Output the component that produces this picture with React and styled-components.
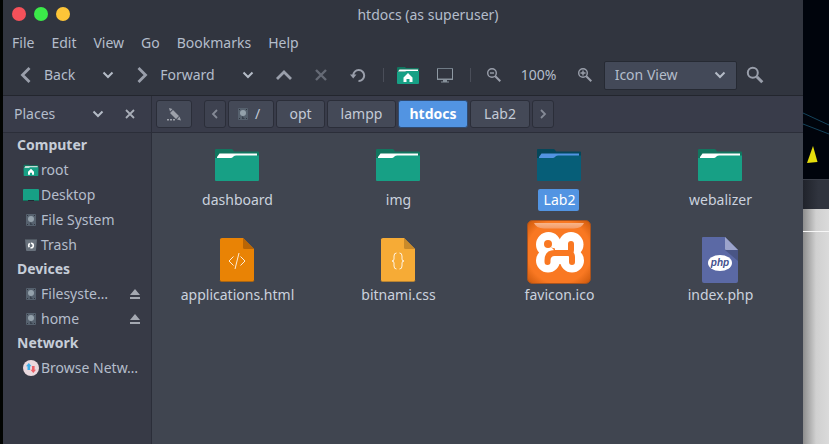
import React from 'react';
import styled, { createGlobalStyle } from 'styled-components';

const Global = createGlobalStyle`
  *, *::before, *::after { box-sizing: border-box; }
  body { margin: 0; background: #000; }
  button, select { font: inherit; color: inherit; margin: 0; }
  svg { display: block; flex: none; }
`;

const Desktop = styled.div`
  display: grid;
  grid-template-columns: 3px minmax(0, 1fr) 26px;
  min-height: 100vh;
  background: #000205;
  font: 14px/20px "Noto Sans", sans-serif;
  color: #b4bdcb;
`;

const EdgeLeft = styled.div`
  background: #010301;
`;

const EdgeRight = styled.div`
  display: flex;
  flex-direction: column;
  background: linear-gradient(90deg, #8d8d8d, #d0d0d0 50%, #dadada);
`;

const Wallpaper = styled.div`
  height: 179px;
  background: #00040c;
`;

const BackWindowBar = styled.div`
  height: 30px;
  border-top: 1px solid #3c404a;
  background: linear-gradient(90deg, #20232b, #30343e 60%);
`;

const BackWindowLine = styled.div`
  height: 23px;
  border-bottom: 1px solid #f6f6f6;
`;

const Window = styled.main`
  display: flex;
  flex-direction: column;
  background: #31353f;
`;

const TitleBar = styled.header`
  display: grid;
  grid-template-columns: 1fr auto 1fr;
  align-items: center;
  height: 28px;
  padding: 0 9px;
`;

const Lights = styled.div`
  display: flex;
  gap: 8px;
`;

const Light = styled.button`
  width: 14px;
  height: 14px;
  padding: 0;
  border: 0;
  border-radius: 50%;
  background: ${(p) => p.$color};
`;

const Title = styled.h1`
  margin: 0;
  padding-top: 2px;
  padding-left: 50px;
  font-size: 14px;
  font-weight: 400;
`;

const MenuBar = styled.nav`
  display: flex;
  gap: 17px;
  align-items: center;
  height: 29px;
  padding: 0 9px;
`;

const PlainButton = styled.button`
  display: flex;
  align-items: center;
  justify-content: center;
  padding: 0;
  border: 0;
  background: none;
  opacity: ${(p) => (p.$dim ? 0.5 : 1)};
`;

const ToolBar = styled.div`
  display: flex;
  align-items: center;
  height: 39px;
  padding: 0 15px 2px;
  border-bottom: 1px solid #23262e;
`;

const NavButton = styled(PlainButton)`
  gap: 10px;
  margin-right: 25px;
`;

const HistoryButton = styled(PlainButton)`
  margin-right: ${(p) => p.$after}px;
`;

const ToolButton = styled(PlainButton)`
  width: ${(p) => p.$width || 37}px;
  height: 28px;
`;

const Divider = styled.span`
  width: 1px;
  height: 14px;
  margin: 0 6px;
  background: #4a4e59;
`;

const ZoomLevel = styled.output`
  width: 56px;
  text-align: center;
`;

const ViewBox = styled.label`
  display: grid;
  width: 133px;
  height: 29px;
  align-items: center;
  > * { grid-area: 1 / 1; }
  > svg { justify-self: end; margin-right: 9px; pointer-events: none; }
`;

const ViewSelect = styled.select`
  appearance: none;
  width: 100%;
  height: 100%;
  padding: 0 10px;
  border: 1px solid #262a33;
  border-radius: 2px;
  background: #434958;
`;

const Body = styled.div`
  display: grid;
  grid-template-columns: 149px minmax(0, 1fr);
  grid-template-rows: 37px 1fr;
  flex: 1;
`;

const PaneHeader = styled.div`
  display: flex;
  align-items: center;
  justify-content: space-between;
  padding: 0 13px 1px 11px;
  border-right: 1px solid #2b2e39;
  border-bottom: 1px solid #2b2e39;
  background: #393c4a;
`;

const PaneTools = styled.div`
  display: flex;
  gap: 16px;
`;

const PathBar = styled.nav`
  display: flex;
  align-items: center;
  gap: 2px;
  padding: 0 4px 1px;
  border-bottom: 1px solid #2b2e39;
  background: #393c4a;
`;

const PathButton = styled.button`
  display: flex;
  align-items: center;
  justify-content: center;
  gap: 4px;
  width: ${(p) => p.$width}px;
  height: 28px;
  margin-right: ${(p) => p.$after || 0}px;
  padding: 0;
  border: 1px solid ${(p) => (p.$active ? '#2f4a70' : '#2b2e39')};
  border-radius: 3px;
  background: ${(p) => (p.$active ? '#5294e2' : p.$flat ? '#3e4250' : '#444957')};
  color: ${(p) => (p.$active ? '#fff' : p.$flat ? '#7c818d' : '#c3cad6')};
  font-weight: ${(p) => (p.$active ? 700 : 400)};
`;

const RootButton = styled(PathButton)`
  padding-right: 7px;
`;

const Sidebar = styled.aside`
  border-right: 1px solid #2b2e39;
  background: #373a46;
`;

const GroupTitle = styled.h2`
  margin: 0;
  padding-left: 14px;
  font-size: 14px;
  font-weight: 700;
  line-height: 24px;
  color: #c6cdd8;
`;

const PlaceList = styled.ul`
  margin: 0;
  padding: 0;
  list-style: none;
`;

const Place = styled.li`
  display: flex;
  align-items: center;
  gap: 2px;
  height: 25px;
  padding: 0 11px 0 20px;
`;

const PlaceName = styled.a`
  flex: 1;
  white-space: nowrap;
  color: inherit;
  text-decoration: none;
`;

const Files = styled.section`
  display: grid;
  grid-template-columns: repeat(4, minmax(0, 1fr));
  align-content: start;
  row-gap: 9px;
  padding: 8px 3px 0 4px;
  background: #404550;
`;

const FileItem = styled.button`
  display: flex;
  flex-direction: column;
  align-items: center;
  justify-content: flex-end;
  padding: 0;
  border: 0;
  background: none;
`;

const FileName = styled.span`
  padding: 0 4px 0 6px;
  line-height: 22px;
  border-radius: 2px;
  color: ${(p) => (p.$selected ? '#fff' : '#cbd2de')};
  background: ${(p) => (p.$selected ? '#5294e2' : 'transparent')};
`;

const Stroke = ({ d, size = 16, width = 2, color = '#9a9fab' }) => (
  <svg width={size} height={size} viewBox="0 0 16 16" fill="none" stroke={color} strokeWidth={width}>
    <path d={d} />
  </svg>
);

const Down = () => <Stroke d="M3.500 5.500 8 10l4.500-4.500" color="#b4bbc6" />;

const FolderIcon = ({ selected }) => {
  const [back, paper, front] = selected ? ['#05475a', '#5294e2', '#065e78'] : ['#12755f', '#fff', '#17a085'];
  return (
    <svg width="48" height="48" viewBox="0 0 48 48">
      <path d="M3 8h15.500q1 0 1.500 1l1 1.500H45q1 0 1 1V24H2V9q0-1 1-1z" fill={back} />
      <path d="M4 18v-2l2.500-3.500H44V18z" fill={paper} />
      <path d="M2 39V17h16q1 0 2-1l1-1q1-.5 2-.5h23V39q0 1-1 1H3q-1 0-1-1z" fill={front} />
    </svg>
  );
};

const HomeIcon = ({ width = 24, height = 18 }) => (
  <svg width={width} height={height} viewBox="0 0 24 18">
    <path d="M1 2q0-1 1-1h7l1 1h12q1 0 1 1v7H1z" fill="#12755f" />
    <path d="M2 5.500 3.500 3.500H22v2z" fill="#fff" />
    <path d="M1 6h8l1.500-1H23v12q0 1-1 1H2q-1 0-1-1z" fill="#17a085" />
    <path d="m12 7 4.500 4.500V16h-3v-3h-3v3h-3v-4.500z" fill="#fff" />
  </svg>
);

const SmallHomeIcon = () => <HomeIcon width={16} height={12} />;

const DesktopIcon = () => (
  <svg width="16" height="16" viewBox="0 0 16 16">
    <rect y="2" width="16" height="12" rx="1" fill="#17a085" />
    <path d="M0 13h16v1H0z" fill="#12755f" />
    <path d="M5 13h6v1H5z" fill="#1f2a33" />
  </svg>
);

const DriveIcon = () => (
  <svg width="16" height="16" viewBox="0 0 16 16">
    <rect x="3" y="2" width="10" height="12" rx="1" fill="#56616e" />
    <path d="M4 3h1v1H4zm7 0h1v1h-1zM4 12h1v1H4zm7 0h1v1h-1z" fill="#303640" />
    <circle cx="8" cy="7" r="3" fill="#94a1ab" />
    <path d="m7 10 3 3H7z" fill="#39424e" />
  </svg>
);

const TrashIcon = () => (
  <svg width="16" height="16" viewBox="0 0 16 16">
    <path d="M2 2h12l-1 11q0 1-1 1H4q-1 0-1-1z" fill="#68717c" />
    <path d="M2 2h12v1H2z" fill="#505862" />
    <circle cx="8" cy="8.500" r="2.300" fill="none" stroke="#fff" strokeWidth="1.600" strokeDasharray="3.800 1" />
  </svg>
);

const NetworkIcon = () => (
  <svg width="16" height="16" viewBox="0 0 16 16">
    <circle cx="8" cy="8" r="8" fill="#ead9de" />
    <path d="M5.800 3 3 6.200h1.500V10h2.600V6.200h1.500z" fill="#3daee9" />
    <path d="M10.300 13 13 9.800h-1.400V6H9v3.800H7.500z" fill="#ec5f67" />
  </svg>
);

const EjectIcon = () => (
  <svg width="10" height="10" viewBox="0 0 10 10" fill="#a4a8b1">
    <path d="m5 0 5 6H0zM0 8h10v2H0z" />
  </svg>
);

const MonitorIcon = () => (
  <svg width="18" height="16" viewBox="0 0 18 16">
    <path d="M1.500 12.500v-11h15v11" fill="none" stroke="#8f99a3" />
    <path d="M1 1h16v1H1z" fill="#6f7a85" />
    <path d="M1 11.500h16V13H1z" fill="#87919b" />
    <path d="M7 13h4v1.500h2v1H5v-1h2z" fill="#87919b" />
  </svg>
);

const ReloadIcon = () => (
  <svg width="16" height="16" viewBox="0 0 16 16">
    <path d="M3.200 8.500A5.500 5.500 0 1 1 8.500 14" fill="none" stroke="#9a9fab" strokeWidth="2" />
    <path d="M0 7.500h6.500L3.200 11.500z" fill="#9a9fab" />
  </svg>
);

const LensIcon = ({ sign }) => (
  <svg width="16" height="16" viewBox="0 0 16 16" fill="none" stroke="#9a9fab">
    <circle cx="6" cy="6" r="4.300" strokeWidth="1.400" />
    <path d="m9.300 9.300 5 5" strokeWidth="2" />
    <path d={sign} strokeWidth="1.400" />
  </svg>
);

const SearchIcon = () => (
  <svg width="18" height="18" viewBox="0 0 18 18" fill="none" stroke="#9a9fab">
    <circle cx="6.800" cy="6.800" r="5" strokeWidth="2" />
    <path d="m10.800 10.800 5.500 5.500" strokeWidth="3" />
  </svg>
);

const PencilIcon = () => (
  <svg width="16" height="16" viewBox="0 0 16 16" fill="#9da1aa">
    <path d="m3 2 3.500 1-2.500 2.500zM7 4l6 6-3 3-6-6zM11 13.500l2.500-3 1.500 4z" />
    <path d="M1 13h2v1.500H1zm3 0h2v1.500H4zm3 0h2v1.500H7z" />
  </svg>
);

const CodeFileIcon = ({ color, fold, mark }) => (
  <svg width="48" height="48" viewBox="0 0 48 48">
    <path d="M9 2h21l11 11v31q0 1.500-1.500 1.500h-31Q7 45.500 7 44V3.500Q7 2 9 2z" fill={color} />
    <path d="M30 2v9.500q0 1.500 1.500 1.500H41z" fill={fold} />
    <path d="M7 44q0 1.500 1.500 1.500h31q1.500 0 1.500-1.500" fill="none" stroke={fold} strokeOpacity=".6" />
    <path d={mark} fill="none" stroke="#fff" strokeOpacity=".85" />
  </svg>
);

const PhpWord = styled.text`
  font: italic 700 10px "Liberation Sans", sans-serif;
  fill: #45528f;
`;

const PhpIcon = () => (
  <svg width="48" height="48" viewBox="0 0 48 48">
    <path d="M7 1h22l13 13v31q0 2-2 2H8q-2 0-2-2V2q0-1 1-1z" fill="#5b69a5" />
    <path d="M29 13v1l13 11V14z" fill="#495585" />
    <path d="M29 1v12q0 1 1 1h12z" fill="#9ca4cc" />
    <ellipse cx="24" cy="27" rx="12" ry="8" fill="#fff" />
    <PhpWord x="24" y="30" textAnchor="middle">php</PhpWord>
  </svg>
);

const XamppIcon = () => (
  <svg width="64" height="64" viewBox="0 0 64 64">
    <defs>
      <radialGradient id="tile" r=".72">
        <stop offset=".7" stopColor="#f97822" />
        <stop offset="1" stopColor="#c65408" />
      </radialGradient>
      <linearGradient id="gloss" x2="0" y2="1">
        <stop stopColor="#f7b48a" />
        <stop offset="1" stopColor="#f59b66" />
      </linearGradient>
    </defs>
    <rect x=".500" y=".500" width="63" height="63" rx="5" fill="url(#tile)" stroke="#a9531e" />
    <path d="M7 3h50q-2 5-10 5.500H17Q9 8 7 3z" fill="url(#gloss)" />
    <g fill="#fff">
      <circle cx="21.500" cy="24.500" r="12.500" />
      <circle cx="44" cy="24.500" r="12.500" />
      <circle cx="21" cy="40.500" r="12" />
      <circle cx="45" cy="40.500" r="12" />
      <path d="M26 21h13v23H26z" />
    </g>
    <circle cx="21" cy="24" r="4" fill="#f97822" />
    <path d="M23 26q2 2 5 2.500V31z" fill="#f97822" />
    <path
      d="M20.500 42v-1.500Q20.500 33 27.500 33H41q3 0 3-3v-6M42 33q3 1 3 4v5"
      fill="none"
      stroke="#f97822"
      strokeWidth="6"
      strokeLinecap="round"
      strokeLinejoin="round"
    />
  </svg>
);

const WallpaperArt = () => (
  <svg width="26" height="179" viewBox="0 0 26 179">
    <path d="m0 113 26 12M0 124l26 10" stroke="#15445c" />
    <path d="M10 146 14.500 162 4 163z" fill="#e6de0c" />
  </svg>
);

const groups = [
  { title: 'Computer', places: [
    ['root', SmallHomeIcon],
    ['Desktop', DesktopIcon],
    ['File System', DriveIcon],
    ['Trash', TrashIcon],
  ] },
  { title: 'Devices', places: [
    ['Filesyste…', DriveIcon, true],
    ['home', DriveIcon, true],
  ] },
  { title: 'Network', places: [['Browse Netw…', NetworkIcon]] },
];

const files = [
  ['dashboard', <FolderIcon />],
  ['img', <FolderIcon />],
  ['Lab2', <FolderIcon selected />, true],
  ['webalizer', <FolderIcon />],
  ['applications.html', <CodeFileIcon color="#e98305" fold="#b96504" mark="m20.500 20.500-4.500 4.500 4.500 4.500m7-9 4.500 4.500-4.500 4.500M26 17l-4 16" />],
  ['bitnami.css', <CodeFileIcon color="#f6ab36" fold="#c98a2a" mark="M22.500 17q-2.500 0-2.500 3v3q0 2-2 2 2 0 2 2v3q0 3 2.500 3m3-16q2.500 0 2.500 3v3q0 2 2 2-2 0-2 2v3q0 3-2.500 3" />],
  ['favicon.ico', <XamppIcon />],
  ['index.php', <PhpIcon />],
];

export default function App() {
  return (
    <>
      <Global />
      <Desktop>
        <EdgeLeft />
        <Window>
          <TitleBar>
            <Lights>
              <Light $color="#f5515a" aria-label="Close" />
              <Light $color="#3bea49" aria-label="Minimize" />
              <Light $color="#fdc538" aria-label="Maximize" />
            </Lights>
            <Title>htdocs (as superuser)</Title>
          </TitleBar>
          <MenuBar>
            {['File', 'Edit', 'View', 'Go', 'Bookmarks', 'Help'].map((name) => (
              <PlainButton key={name}>{name}</PlainButton>
            ))}
          </MenuBar>
          <ToolBar>
            <NavButton><Stroke d="M11.500 1 4.500 8l7 7" width={2.8} />Back</NavButton>
            <HistoryButton $after={18} aria-label="Back history"><Down /></HistoryButton>
            <NavButton><Stroke d="m4.500 1 7 7-7 7" width={2.8} />Forward</NavButton>
            <HistoryButton $after={10} aria-label="Forward history"><Down /></HistoryButton>
            <ToolButton aria-label="Up"><Stroke d="M1 12 8 5l7 7" width={2.8} /></ToolButton>
            <ToolButton $dim aria-label="Stop"><Stroke d="m3 3 10 10m0-10-10 10" width={2.4} /></ToolButton>
            <ToolButton aria-label="Reload"><ReloadIcon /></ToolButton>
            <Divider />
            <ToolButton aria-label="Home"><HomeIcon /></ToolButton>
            <ToolButton aria-label="Computer"><MonitorIcon /></ToolButton>
            <Divider />
            <ToolButton $width={34} aria-label="Zoom out"><LensIcon sign="M4 6h4" /></ToolButton>
            <ZoomLevel>100%</ZoomLevel>
            <ToolButton aria-label="Zoom in"><LensIcon sign="M3.500 6h5M6 3.500v5" /></ToolButton>
            <ViewBox>
              <ViewSelect aria-label="View mode"><option>Icon View</option></ViewSelect>
              <Down />
            </ViewBox>
            <ToolButton aria-label="Search"><SearchIcon /></ToolButton>
          </ToolBar>
          <Body>
            <PaneHeader>
              <PlainButton>Places</PlainButton>
              <PaneTools>
                <PlainButton aria-label="Choose pane"><Down /></PlainButton>
                <PlainButton aria-label="Close pane"><Stroke d="m4 4 8 8m0-8-8 8" color="#a9aeb8" width={1.8} /></PlainButton>
              </PaneTools>
            </PaneHeader>
            <PathBar>
              <PathButton $width={36} $after={10} aria-label="Edit location"><PencilIcon /></PathButton>
              <PathButton $width={22} $flat aria-label="Scroll left"><Stroke d="M10 4 6 8l4 4" width={1.8} color="#858a96" /></PathButton>
              <RootButton $width={46}><DriveIcon />/</RootButton>
              <PathButton $width={49}>opt</PathButton>
              <PathButton $width={69}>lampp</PathButton>
              <PathButton $width={70} $active>htdocs</PathButton>
              <PathButton $width={60}>Lab2</PathButton>
              <PathButton $width={22} $flat aria-label="Scroll right"><Stroke d="m6 4 4 4-4 4" width={1.8} color="#858a96" /></PathButton>
            </PathBar>
            <Sidebar>
              {groups.map((group) => (
                <React.Fragment key={group.title}>
                  <GroupTitle>{group.title}</GroupTitle>
                  <PlaceList>
                    {group.places.map(([name, Icon, ejectable]) => (
                      <Place key={name}>
                        <Icon />
                        <PlaceName href="#">{name}</PlaceName>
                        {ejectable && <PlainButton aria-label={`Eject ${name}`}><EjectIcon /></PlainButton>}
                      </Place>
                    ))}
                  </PlaceList>
                </React.Fragment>
              ))}
            </Sidebar>
            <Files>
              {files.map(([name, icon, selected]) => (
                <FileItem key={name}>
                  {icon}
                  <FileName $selected={selected}>{name}</FileName>
                </FileItem>
              ))}
            </Files>
          </Body>
        </Window>
        <EdgeRight>
          <Wallpaper><WallpaperArt /></Wallpaper>
          <BackWindowBar />
          <BackWindowLine />
        </EdgeRight>
      </Desktop>
    </>
  );
}
